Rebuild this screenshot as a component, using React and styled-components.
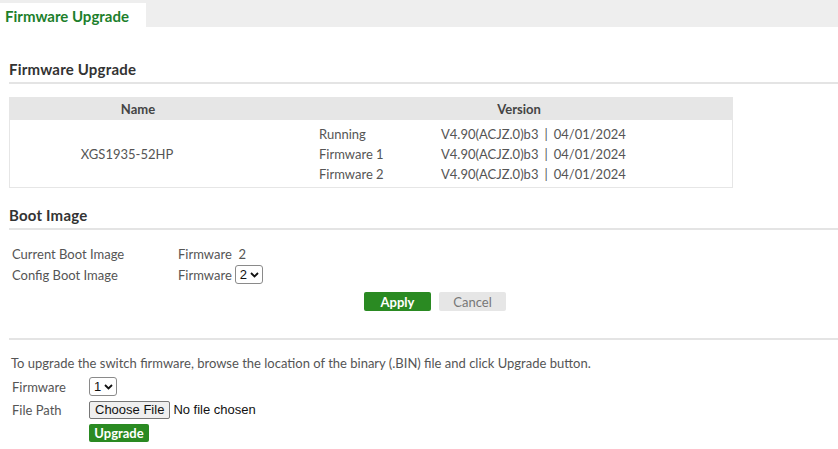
import React from 'react'
import styled, { createGlobalStyle } from 'styled-components'

const GlobalStyle = createGlobalStyle`
  html, body {
    margin: 0;
    padding: 0;
    background: #ffffff;
  }
  body {
    font-family: 'Lato', 'Noto Sans', sans-serif;
    font-size: 13px;
    line-height: 16px;
    color: #555555;
  }
`

const Page = styled.div`
  width: 838px;
  height: 449px;
  overflow: hidden;
  background: #fff;
`

const TabBar = styled.div`
  height: 27px;
  background: #eeeeee;
  display: flex;
  align-items: flex-end;
`

const Tab = styled.div`
  height: 24px;
  width: 146px;
  background: #fff;
  color: #1d7f2c;
  font-weight: 700;
  font-size: 15px;
  line-height: 26px;
  padding-left: 5px;
  box-sizing: border-box;
`

const Content = styled.div`
  padding: 0 0 0 9px;
`

const SectionTitle = styled.h2`
  margin: 0;
  font-size: 15px;
  line-height: 18px;
  letter-spacing: 0.2px;
  font-weight: 700;
  color: #333333;
  padding-top: ${p => p.$top}px;
  padding-bottom: 4px;
  border-bottom: 2px solid #e4e4e4;
`

const Table = styled.div`
  width: 724px;
  margin-top: 13px;
  border: 1px solid #e6e6e6;
  border-top: none;
  box-sizing: border-box;
`

const HeadRow = styled.div`
  display: grid;
  grid-template-columns: 256px 1fr;
  height: 23px;
  align-items: center;
  background: #e6e6e6;
  font-weight: 700;
  color: #444;
  font-size: 13px;
`

const HeadCell = styled.div`
  text-align: center;
  padding-left: ${p => p.$pad || 0}px;
`

const BodyRow = styled.div`
  display: grid;
  grid-template-columns: 234px 122px 1fr;
  align-items: center;
  padding: 4px 0 3px 0;
`

const DeviceName = styled.div`
  text-align: center;
  color: #555;
`

const Stack = styled.div`
  display: flex;
  flex-direction: column;
  line-height: 20px;
  white-space: nowrap;
  color: #555;
  padding-left: ${p => p.$pad || 0}px;
`

const Sep = styled.span`
  margin: 0 6px;
`

const FormRow = styled.div`
  display: grid;
  grid-template-columns: ${p => p.$label}px 1fr;
  align-items: center;
  height: ${p => p.$h || 21}px;
  padding-left: 3px;
  color: #555;
`

const Inline = styled.div`
  display: flex;
  align-items: center;
  gap: 3px;
`

const SelectBox = styled.span`
  display: inline-flex;
  align-items: center;
  gap: 3px;
  height: 19px;
  padding: 0 3px 0 4px;
  border: 1px solid #8a8a8a;
  border-radius: 3px;
  box-sizing: border-box;
  color: #111;
  font-family: 'Liberation Sans', Arial, sans-serif;
  font-size: 13px;
  background: #fff;
`

const Buttons = styled.div`
  display: flex;
  gap: 8px;
  padding-left: 355px;
  margin-top: 7px;
`

const Btn = styled.button`
  width: 67px;
  height: 19px;
  border: none;
  border-radius: 2px;
  font-family: 'Lato', sans-serif;
  font-size: 13px;
  font-weight: ${p => (p.$primary ? 700 : 400)};
  background: ${p => (p.$primary ? '#2a8a22' : '#e6e6e6')};
  color: ${p => (p.$primary ? '#fff' : '#777')};
  padding: 0;
`

const Divider = styled.div`
  margin-top: 27px;
  border-top: 2px solid #e4e4e4;
`

const Note = styled.p`
  margin: 15px 0 5px 2px;
  color: #555;
`

const FileButton = styled.span`
  display: inline-flex;
  align-items: center;
  height: 18px;
  padding: 0 5px;
  background: #efefef;
  border: 1px solid #767676;
  border-radius: 2px;
  box-sizing: border-box;
  font-family: 'Liberation Sans', Arial, sans-serif;
  font-size: 13px;
  color: #111;
`

const FileText = styled.span`
  font-family: 'Liberation Sans', Arial, sans-serif;
  font-size: 13px;
  color: #111;
`

const UpgradeBtn = styled(Btn)`
  width: 60px;
  height: 18px;
`

const Spacer = styled.div`
  height: ${p => p.$h}px;
`

const Chevron = () => (
  <svg width="9" height="6" viewBox="0 0 9 6">
    <path d="M1 1 L4.5 4.5 L8 1" fill="none" stroke="#111" strokeWidth="1.8" />
  </svg>
)

const versions = ['V4.90(ACJZ.0)b3', 'V4.90(ACJZ.0)b3', 'V4.90(ACJZ.0)b3']

export default function App() {
  return (
    <Page>
      <GlobalStyle />
      <TabBar>
        <Tab>Firmware Upgrade</Tab>
      </TabBar>
      <Content>
        <SectionTitle $top={33}>Firmware Upgrade</SectionTitle>
        <Table>
          <HeadRow>
            <HeadCell>Name</HeadCell>
            <HeadCell $pad={40}>Version</HeadCell>
          </HeadRow>
          <BodyRow>
            <DeviceName>XGS1935-52HP</DeviceName>
            <Stack $pad={75}>
              <span>Running</span>
              <span>Firmware 1</span>
              <span>Firmware 2</span>
            </Stack>
            <Stack $pad={75}>
              {versions.map((v, i) => (
                <span key={i}>
                  {v}
                  <Sep>|</Sep>04/01/2024
                </span>
              ))}
            </Stack>
          </BodyRow>
        </Table>
        <SectionTitle $top={18}>Boot Image</SectionTitle>
        <Spacer $h={13} />
        <FormRow $label={166}>
          <span>Current Boot Image</span>
          <span>Firmware&nbsp; 2</span>
        </FormRow>
        <FormRow $label={166}>
          <span>Config Boot Image</span>
          <Inline>
            <span>Firmware</span>
            <SelectBox>
              2 <Chevron />
            </SelectBox>
          </Inline>
        </FormRow>
        <Buttons>
          <Btn $primary>Apply</Btn>
          <Btn>Cancel</Btn>
        </Buttons>
        <Divider />
        <Note>
          To upgrade the switch firmware, browse the location of the binary (.BIN) file and click Upgrade button.
        </Note>
        <FormRow $label={77} $h={21}>
          <span>Firmware</span>
          <Inline>
            <SelectBox>
              1 <Chevron />
            </SelectBox>
          </Inline>
        </FormRow>
        <FormRow $label={77} $h={25}>
          <span>File Path</span>
          <Inline>
            <FileButton>Choose File</FileButton>
            <FileText>No file chosen</FileText>
          </Inline>
        </FormRow>
        <FormRow $label={77} $h={22}>
          <span />
          <Inline>
            <UpgradeBtn $primary>Upgrade</UpgradeBtn>
          </Inline>
        </FormRow>
      </Content>
    </Page>
  )
}
